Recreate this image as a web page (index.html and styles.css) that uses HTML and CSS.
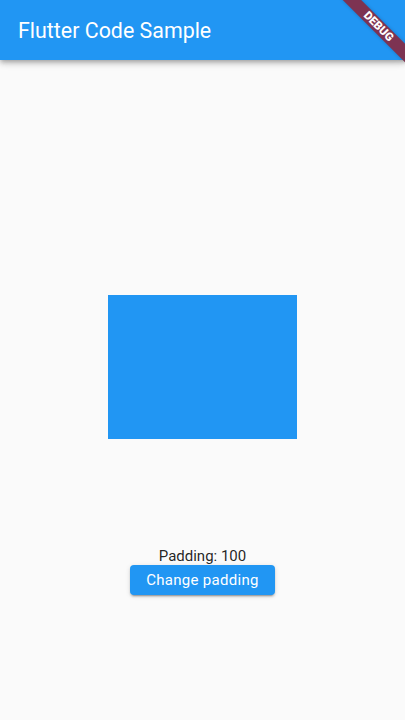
FILE: index.html
```html
<!DOCTYPE html>
<html lang="en">
<head>
<meta charset="utf-8">
<title>Flutter Code Sample</title>
<link rel="stylesheet" href="styles.css">
</head>
<body>
<div class="app">
  <header class="appbar">
    <h1 class="title">Flutter Code Sample</h1>
  </header>
  <main class="content">
    <div class="box"></div>
    <p class="label">Padding: 100</p>
    <button class="btn" type="button">Change padding</button>
  </main>
  <div class="banner-anchor">
    <div class="banner"><span class="banner-text">DEBUG</span></div>
  </div>
</div>
</body>
</html>
```

FILE: styles.css
```css
html, body {
  margin: 0;
  padding: 0;
  height: 100%;
  overflow: hidden;
}
body {
  font-family: Roboto, "Noto Sans", "Liberation Sans", sans-serif;
  background: #fafafa;
}
.app {
  position: relative;
  width: 405px;
  height: 720px;
  overflow: hidden;
  display: flex;
  flex-direction: column;
}
.appbar {
  height: 60px;
  background: #2196f3;
  display: flex;
  align-items: center;
  padding: 0 18px;
  box-shadow: 0 2px 4px -1px rgba(0,0,0,0.2), 0 4px 5px 0 rgba(0,0,0,0.14), 0 1px 10px 0 rgba(0,0,0,0.12);
  position: relative;
  z-index: 1;
}
.title {
  margin: 0;
  padding-top: 2px;
  font-size: 21.4px;
  font-weight: 400;
  color: #fff;
  line-height: 26px;
  letter-spacing: 0;
}
.content {
  flex: 1;
  display: flex;
  flex-direction: column;
  align-items: center;
  padding-top: 235px;
}
.box {
  width: 189px;
  height: 144px;
  background: #2196f3;
}
.label {
  margin: 107.5px 0 0;
  font-size: 15px;
  line-height: 18px;
  color: rgba(0,0,0,0.87);
}
.btn {
  margin-top: 0;
  height: 30px;
  width: 145px;
  padding: 0;
  border: 0;
  border-radius: 4px;
  background: #2196f3;
  color: #fff;
  font-family: inherit;
  font-size: 15px;
  font-weight: 400;
  line-height: 30px;
  letter-spacing: 0.3px;
  box-shadow: 0 3px 1px -2px rgba(0,0,0,0.2), 0 2px 2px 0 rgba(0,0,0,0.14), 0 1px 5px 0 rgba(0,0,0,0.12);
}
.banner-anchor {
  position: absolute;
  top: 0;
  right: 0;
  width: 0;
  height: 0;
  transform: rotate(45deg);
  transform-origin: 0 0;
  z-index: 2;
}
.banner {
  position: absolute;
  left: -45px;
  top: 31px;
  width: 90px;
  height: 13px;
  background: #7d3352;
  box-shadow: 0 0 4px rgba(0,0,0,0.2);
  display: flex;
  align-items: center;
  justify-content: center;
}
.banner-text {
  color: #fff;
  font-size: 11.5px;
  font-weight: 900;
  line-height: 13px;
}
```
